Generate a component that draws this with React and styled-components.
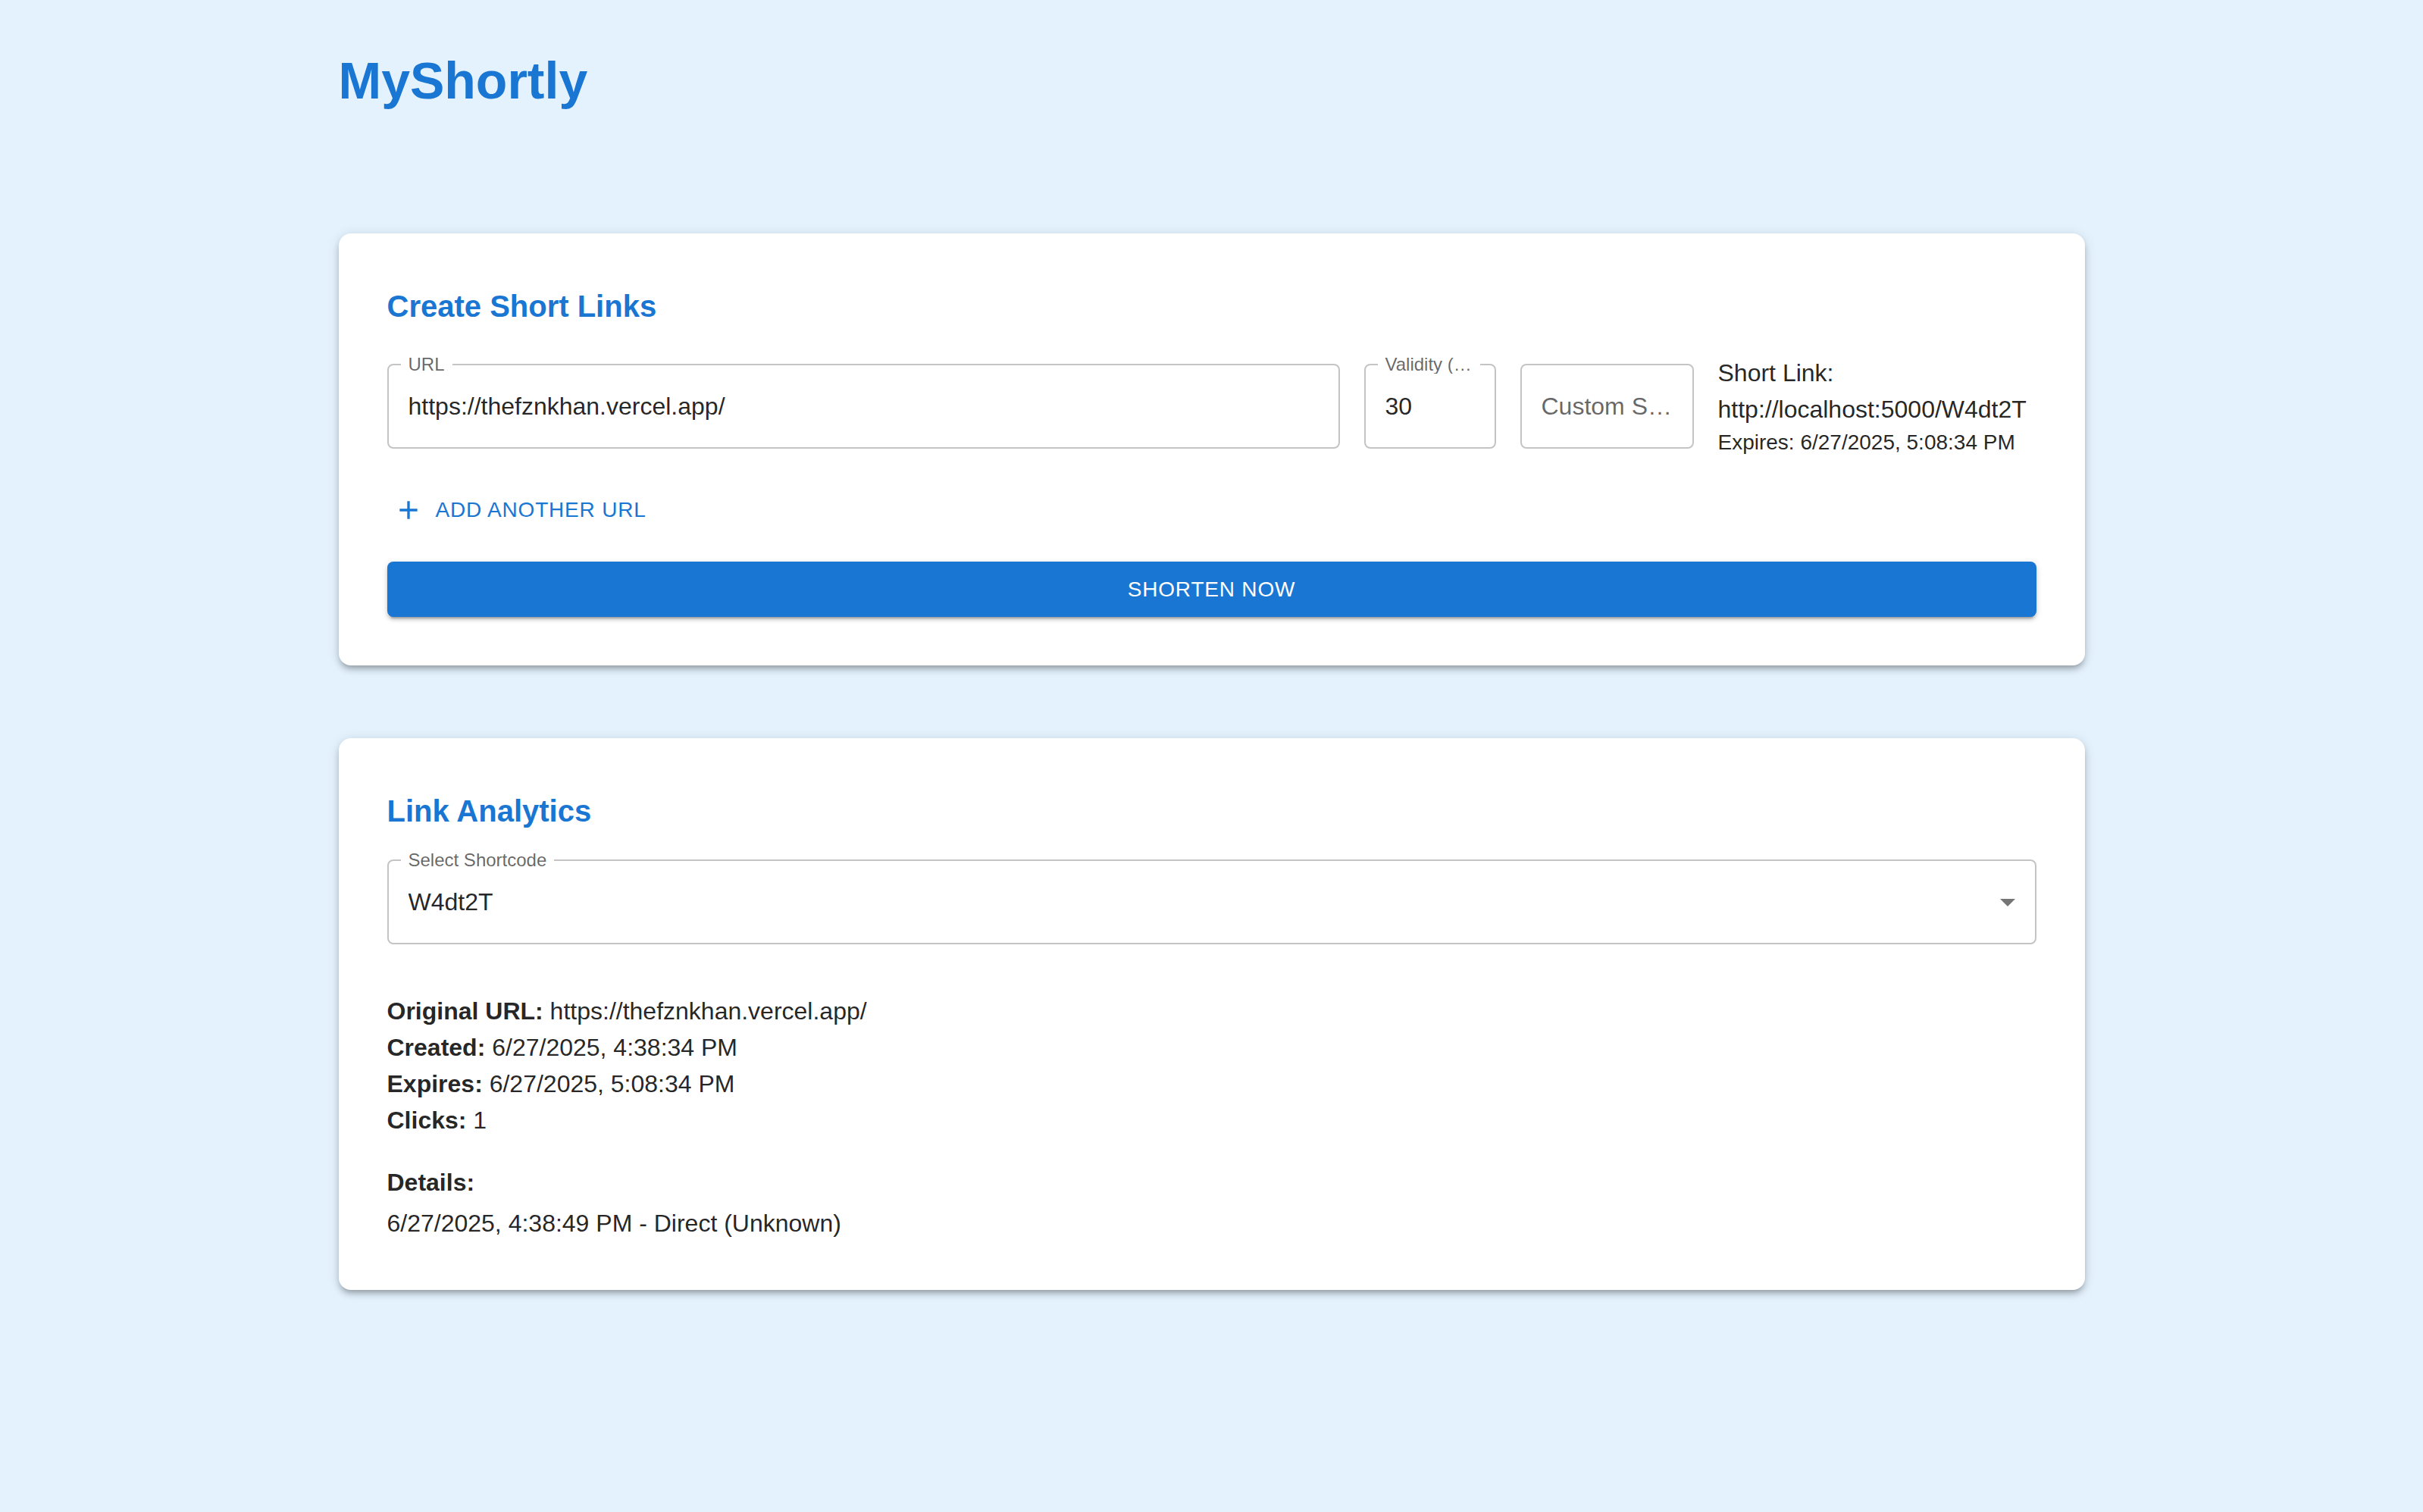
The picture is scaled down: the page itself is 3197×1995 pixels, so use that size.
import styled, { createGlobalStyle } from "styled-components";

const GlobalStyle = createGlobalStyle`
  body {
    margin: 0;
    background-color: #e3f2fd;
    font-family: "Liberation Sans", Arial, Helvetica, sans-serif;
    color: rgba(0, 0, 0, 0.87);
  }
`;

const Page = styled.div`
  min-height: 100vh;
  background-color: #e3f2fd;
`;

const Container = styled.div`
  max-width: 2400px;
  margin: 0 auto;
  padding: 0 48px;
  box-sizing: border-box;
`;

const Brand = styled.h1`
  margin: 0 0 160px;
  padding-top: 64px;
  font-size: 68px;
  line-height: 84px;
  font-weight: 700;
  color: #1976d2;
`;

const Card = styled.section`
  background-color: #fff;
  border-radius: 16px;
  padding: 64px;
  margin-bottom: ${(p) => p.$gap || 0}px;
  box-shadow: 0px 6px 6px -4px rgba(0, 0, 0, 0.2),
    0px 6px 8px 0px rgba(0, 0, 0, 0.14), 0px 2px 16px 0px rgba(0, 0, 0, 0.12);
`;

const SectionTitle = styled.h2`
  margin: 0 0 32px;
  font-size: 40px;
  line-height: 64px;
  font-weight: 700;
  color: #1976d2;
`;

const FormRow = styled.div`
  display: flex;
  align-items: center;
  gap: 32px;
`;

const Field = styled.div`
  position: relative;
  box-sizing: border-box;
  height: 112px;
  flex: ${(p) => (p.$width ? "none" : "1")};
  width: ${(p) => (p.$width ? `${p.$width}px` : "auto")};
  min-width: 0;
  border: 2px solid #c4c4c4;
  border-radius: 8px;
  padding: 0 ${(p) => (p.$select ? "12px" : "26px")} 0 26px;
  display: flex;
  align-items: center;
  font-size: 32px;
  line-height: 46px;
`;

const FloatLabel = styled.span`
  position: absolute;
  top: -13px;
  left: 16px;
  padding: 0 10px;
  background-color: #fff;
  font-size: 24px;
  line-height: 24px;
  color: rgba(0, 0, 0, 0.6);
  white-space: nowrap;
  overflow: hidden;
  text-overflow: ellipsis;
  max-width: ${(p) => (p.$max ? `${p.$max}px` : "none")};
`;

const Value = styled.span`
  flex: 1;
  min-width: 0;
  white-space: nowrap;
  overflow: hidden;
  text-overflow: ellipsis;
  color: ${(p) => (p.$muted ? "rgba(0, 0, 0, 0.6)" : "rgba(0, 0, 0, 0.87)")};
`;

const ShortLink = styled.div`
  flex: none;
  width: 420px;
  display: flex;
  flex-direction: column;
`;

const InfoLine = styled.div`
  font-size: ${(p) => (p.$small ? 28 : 32)}px;
  line-height: ${(p) => (p.$small ? 40 : 48)}px;
  white-space: nowrap;
`;

const AddButton = styled.button`
  margin-top: 32px;
  display: inline-flex;
  align-items: center;
  height: 73px;
  padding: 0 16px 0 8px;
  border: none;
  background: none;
  color: #1976d2;
  font-family: inherit;
  font-size: 28px;
  font-weight: 500;
  letter-spacing: 0.8px;
  text-transform: uppercase;
  cursor: pointer;

  svg {
    width: 40px;
    height: 40px;
    margin-right: 16px;
    fill: currentColor;
  }
`;

const ShortenButton = styled.button`
  display: block;
  width: 100%;
  margin-top: 32px;
  height: 73px;
  border: none;
  border-radius: 8px;
  background-color: #1976d2;
  color: #fff;
  font-family: inherit;
  font-size: 28px;
  letter-spacing: 0.8px;
  text-transform: uppercase;
  cursor: pointer;
  box-shadow: 0px 6px 2px -4px rgba(0, 0, 0, 0.2),
    0px 4px 4px 0px rgba(0, 0, 0, 0.14), 0px 2px 10px 0px rgba(0, 0, 0, 0.12);
`;

const Arrow = styled.svg`
  width: 48px;
  height: 48px;
  fill: rgba(0, 0, 0, 0.54);
  flex: none;
`;

const Stats = styled.div`
  margin-top: 64px;
`;

const StatLine = styled.p`
  margin: ${(p) => p.$top || 0}px 0 0;
  font-size: 32px;
  line-height: 48px;

  strong {
    font-weight: 700;
  }
`;

const App = () => {
  return (
    <Page>
      <GlobalStyle />
      <Container>
        <Brand>MyShortly</Brand>

        <Card $gap={96}>
          <SectionTitle>Create Short Links</SectionTitle>
          <FormRow>
            <Field>
              <FloatLabel>URL</FloatLabel>
              <Value>https://thefznkhan.vercel.app/</Value>
            </Field>
            <Field $width={174}>
              <FloatLabel $max={115}>Validity (minutes)</FloatLabel>
              <Value>30</Value>
            </Field>
            <Field $width={229}>
              <Value $muted>Custom Shortcode</Value>
            </Field>
            <ShortLink>
              <InfoLine>Short Link:</InfoLine>
              <InfoLine>http://localhost:5000/W4dt2T</InfoLine>
              <InfoLine $small>Expires: 6/27/2025, 5:08:34 PM</InfoLine>
            </ShortLink>
          </FormRow>

          <AddButton>
            <svg viewBox="0 0 24 24">
              <path d="M19 13h-6v6h-2v-6H5v-2h6V5h2v6h6z" />
            </svg>
            Add another URL
          </AddButton>

          <ShortenButton>Shorten Now</ShortenButton>
        </Card>

        <Card>
          <SectionTitle>Link Analytics</SectionTitle>
          <Field $select>
            <FloatLabel>Select Shortcode</FloatLabel>
            <Value>W4dt2T</Value>
            <Arrow viewBox="0 0 24 24">
              <path d="M7 10l5 5 5-5z" />
            </Arrow>
          </Field>

          <Stats>
            <StatLine>
              <strong>Original URL:</strong> https://thefznkhan.vercel.app/
            </StatLine>
            <StatLine>
              <strong>Created:</strong> 6/27/2025, 4:38:34 PM
            </StatLine>
            <StatLine>
              <strong>Expires:</strong> 6/27/2025, 5:08:34 PM
            </StatLine>
            <StatLine>
              <strong>Clicks:</strong> 1
            </StatLine>
            <StatLine $top={34}>
              <strong>Details:</strong>
            </StatLine>
            <StatLine $top={6}>6/27/2025, 4:38:49 PM - Direct (Unknown)</StatLine>
          </Stats>
        </Card>
      </Container>
    </Page>
  );
};

export default App;
